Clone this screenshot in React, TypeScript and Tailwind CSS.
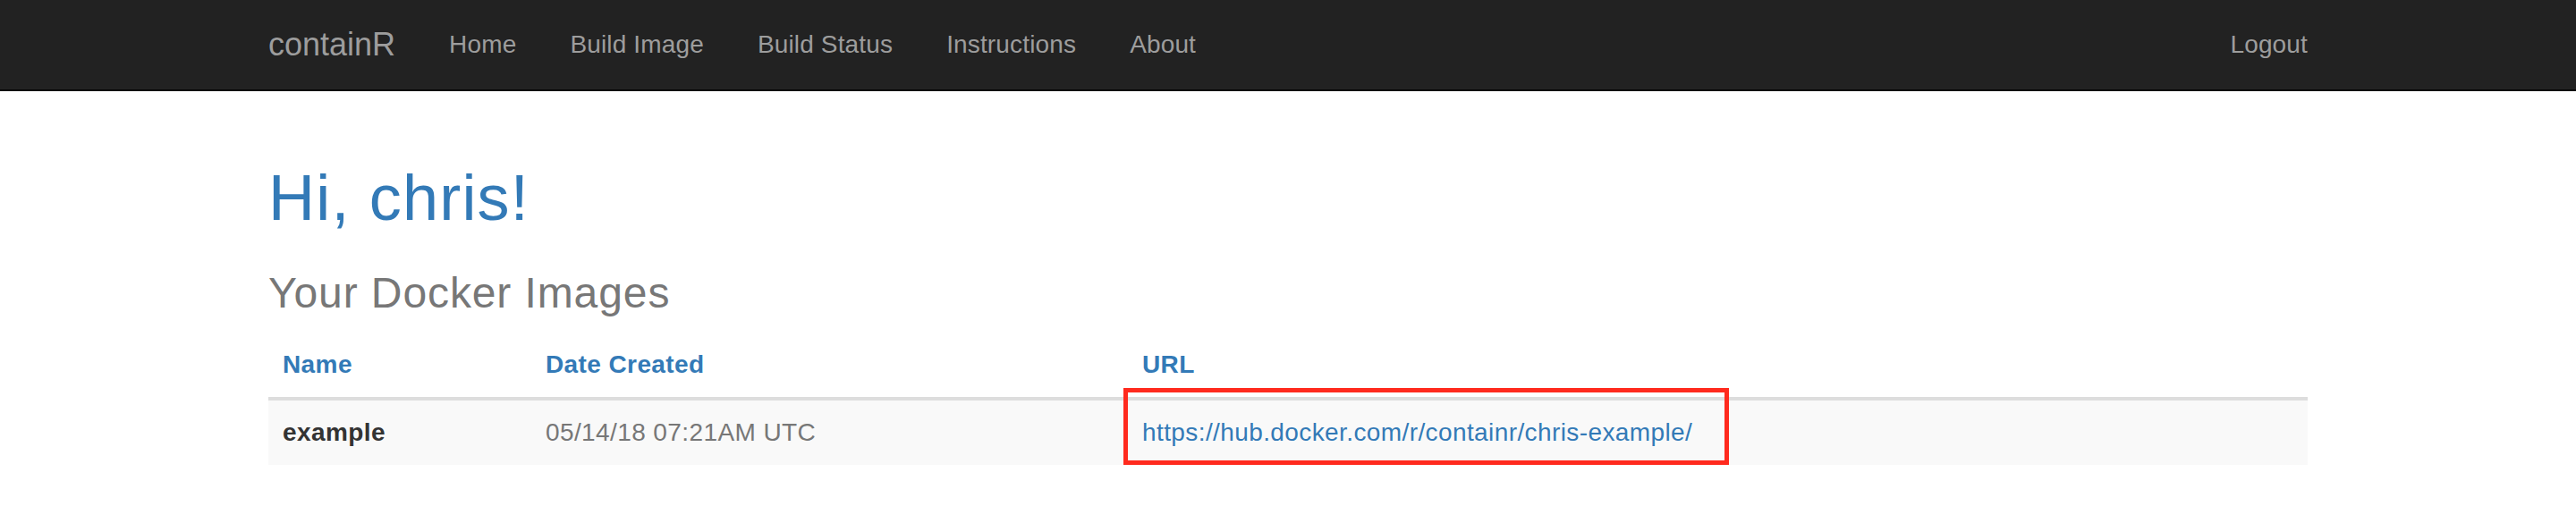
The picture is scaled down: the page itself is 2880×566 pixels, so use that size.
export default function App() {
  const navLinks = ["Home", "Build Image", "Build Status", "Instructions", "About"];

  return (
    <div className="min-h-[566px] bg-white font-['Liberation_Sans',Arial,sans-serif] text-[28px] tracking-[0.4px] text-[#333]">
      {/* navbar */}
      <nav className="h-[102px] border-b-2 border-[#080808] bg-[#222]">
        <div className="mx-auto flex w-[2340px] px-[30px]">
          <a className="-ml-[30px] px-[30px] py-[30px] text-[36px] leading-[40px] tracking-normal text-[#9d9d9d]">
            containR
          </a>
          <ul className="flex">
            {navLinks.map((l) => (
              <li key={l}>
                <a className="block px-[30px] py-[30px] text-[28px] leading-[40px] tracking-[0.15px] text-[#9d9d9d]">
                  {l}
                </a>
              </li>
            ))}
          </ul>
          <ul className="-mr-[30px] ml-auto flex">
            <li>
              <a className="block px-[30px] py-[30px] text-[28px] leading-[40px] tracking-[0.15px] text-[#9d9d9d]">
                Logout
              </a>
            </li>
          </ul>
        </div>
      </nav>

      <div className="mx-auto w-[2340px] px-[30px] pt-[80px]">
        <h1 className="text-[72px] font-medium leading-[79px] tracking-[1.2px] text-[#337ab7]">
          Hi, chris!
        </h1>
        <h3 className="mt-[40px] mb-[18px] text-[48px] font-medium leading-[53px] tracking-[0.9px] text-[#777]">
          Your Docker Images
        </h3>

        <table className="w-full table-fixed border-separate border-spacing-0">
          <thead>
            <tr>
              <th className="w-[294px] border-b-4 border-[#ddd] p-[16px] text-left font-bold leading-[40px] text-[#337ab7]">
                Name
              </th>
              <th className="w-[667px] border-b-4 border-[#ddd] p-[16px] text-left font-bold leading-[40px] text-[#337ab7]">
                Date Created
              </th>
              <th className="border-b-4 border-[#ddd] p-[16px] text-left font-bold leading-[40px] text-[#337ab7]">
                URL
              </th>
            </tr>
          </thead>
          <tbody>
            <tr className="bg-[#f9f9f9]">
              <td className="p-[16px] font-bold leading-[40px] text-[#333]">example</td>
              <td className="p-[16px] leading-[40px] text-[#777]">05/14/18 07:21AM UTC</td>
              <td className="p-[16px] leading-[40px]">
                <span className="relative inline-block">
                  <a className="text-[#337ab7]">https://hub.docker.com/r/containr/chris-example/</a>
                  {/* highlight box drawn over the screenshot */}
                  <span className="pointer-events-none absolute -left-[21px] -top-[30px] h-[86px] w-[677px] border-[5px] border-[#ff2a1e]" />
                </span>
              </td>
            </tr>
          </tbody>
        </table>
      </div>
    </div>
  );
}
